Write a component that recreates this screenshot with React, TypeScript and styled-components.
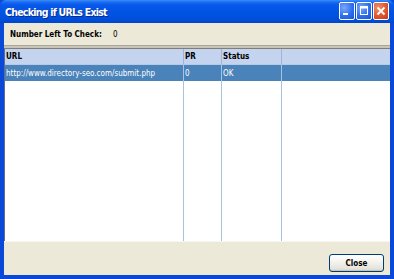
import React from "react";
import styled, { createGlobalStyle } from "styled-components";

const Global = createGlobalStyle`
  html, body { margin: 0; padding: 0; background: #fff; }
  body { font-family: "DejaVu Sans Condensed", "DejaVu Sans", sans-serif; }
`;

const uiFont = `"DejaVu Sans Condensed", "DejaVu Sans", Verdana, sans-serif`;

const Window = styled.div`
  width: 394px;
  height: 279px;
  display: flex;
  flex-direction: column;
  background: #0a48d8;
  box-sizing: border-box;
  overflow: hidden;
`;

const TitleBar = styled.div`
  height: 23px;
  flex: none;
  display: flex;
  align-items: center;
  padding: 0 5px 0 5px;
  background: linear-gradient(
    to bottom,
    #3d8ff7 0px,
    #1a6cf2 2px,
    #0858ea 5px,
    #0054e3 12px,
    #0050dc 18px,
    #0046cc 23px
  );
  border-radius: 6px 6px 0 0;
`;

const Title = styled.div`
  flex: 1;
  color: #fff;
  font-family: ${uiFont};
  font-stretch: condensed;
  font-weight: bold;
  font-size: 10.5px;
  letter-spacing: -0.75px;
  text-shadow: 1px 1px 0 #0a2a8a;
`;

const Buttons = styled.div`
  display: flex;
  gap: 1px;
  margin-top: -2px;
`;

const CapButton = styled.div<{ $close?: boolean }>`
  width: 14px;
  height: 16px;
  border: 1px solid #fff;
  border-radius: 2px;
  box-sizing: content-box;
  display: flex;
  align-items: center;
  justify-content: center;
  background: ${(p) =>
    p.$close
      ? "radial-gradient(circle at 30% 30%, #f0906a 0%, #e0562e 55%, #c2391a 100%)"
      : "radial-gradient(circle at 30% 30%, #7aa8f8 0%, #2e6ef0 55%, #1b54d8 100%)"};
`;

const Body = styled.div`
  flex: 1;
  display: flex;
  flex-direction: column;
  margin: 0 4px 4px 4px;
  background: #ece9d8;
  min-height: 0;
`;

const InfoRow = styled.div`
  height: 22px;
  flex: none;
  display: flex;
  align-items: center;
  padding-left: 6px;
  font-size: 8px;
  font-family: ${uiFont};
  font-stretch: condensed;
  color: #000;
`;

const InfoLabel = styled.span`
  font-weight: bold;
  width: 103px;
  flex: none;
`;

const Separator = styled.div`
  height: 2px;
  flex: none;
  border-top: 1px solid #a9a79c;
  border-bottom: 1px solid #807e76;
  background: #c8c5b8;
`;

const List = styled.div`
  flex: none;
  height: 192px;
  display: grid;
  grid-template-columns: 179px 38px 60px 1fr;
  grid-template-rows: 16px 16px 1fr;
  background: #fff;
  border-left: 1px solid #5a6e96;
  font-family: ${uiFont};
  font-stretch: condensed;
  font-size: 8px;
`;

const HeadCell = styled.div<{ $last?: boolean }>`
  background: #c5d4ee;
  font-weight: bold;
  color: #000;
  display: flex;
  align-items: center;
  padding-left: 1px;
  border-right: ${(p) => (p.$last ? "none" : "1px solid #9fb3d8")};
  border-bottom: 1px solid #b8c8e6;
  white-space: nowrap;
  overflow: hidden;
`;

const RowCell = styled.div<{ $last?: boolean }>`
  background: #4a82ba;
  color: #fff;
  display: flex;
  align-items: center;
  padding-left: 1px;
  border-right: ${(p) => (p.$last ? "none" : "1px solid #a8c2e2")};
  white-space: nowrap;
  overflow: hidden;
`;

const FillCell = styled.div<{ $last?: boolean }>`
  border-right: ${(p) => (p.$last ? "none" : "1px solid #a8c2e2")};
`;

const Footer = styled.div`
  flex: 1;
  display: flex;
  justify-content: flex-end;
  align-items: flex-start;
  padding: 12px 6px 0 0;
  border-top: 1px solid #f6f5ef;
`;

const CloseButton = styled.button`
  width: 55px;
  height: 18px;
  padding: 0;
  border: 1px solid #003c74;
  border-radius: 3px;
  background: linear-gradient(to bottom, #ffffff 0%, #f4f4f0 40%, #e6e4da 85%, #d6d0c0 100%);
  font-family: ${uiFont};
  font-stretch: condensed;
  font-weight: bold;
  font-size: 8px;
  color: #000;
  box-shadow: inset 0 -1px 0 #c9c5b5;
`;

export default function App() {
  return (
    <>
      <Global />
      <Window>
        <TitleBar>
          <Title>Checking if URLs Exist</Title>
          <Buttons>
            <CapButton>
              <svg width="14" height="16" viewBox="0 0 14 16">
                <rect x="3" y="10" width="5" height="2" fill="#fff" />
              </svg>
            </CapButton>
            <CapButton>
              <svg width="14" height="16" viewBox="0 0 14 16">
                <rect x="3.5" y="3.5" width="7" height="8" fill="none" stroke="#fff" strokeWidth="1" />
                <rect x="3.5" y="3.5" width="7" height="2" fill="#fff" />
              </svg>
            </CapButton>
            <CapButton $close>
              <svg width="14" height="16" viewBox="0 0 14 16">
                <path d="M3.5 4.5 L10.5 11.5 M10.5 4.5 L3.5 11.5" stroke="#fff" strokeWidth="1.8" />
              </svg>
            </CapButton>
          </Buttons>
        </TitleBar>
        <Body>
          <InfoRow>
            <InfoLabel>Number Left To Check:</InfoLabel>
            <span>0</span>
          </InfoRow>
          <Separator />
          <List>
            <HeadCell>URL</HeadCell>
            <HeadCell>PR</HeadCell>
            <HeadCell>Status</HeadCell>
            <HeadCell $last />
            <RowCell>http://www.directory-seo.com/submit.php</RowCell>
            <RowCell>0</RowCell>
            <RowCell>OK</RowCell>
            <RowCell $last />
            <FillCell />
            <FillCell />
            <FillCell />
            <FillCell $last />
          </List>
          <Footer>
            <CloseButton>Close</CloseButton>
          </Footer>
        </Body>
      </Window>
    </>
  );
}
